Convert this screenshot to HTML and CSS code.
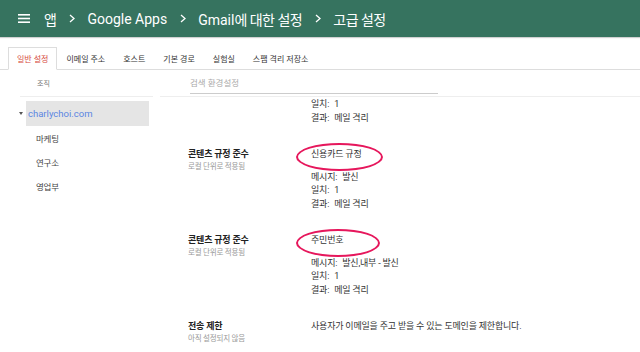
FILE: index.html
```html
<!DOCTYPE html>
<html lang="ko">
<head>
<meta charset="utf-8">
<link rel="stylesheet" href="styles.css">
</head>
<body>
<header class="appbar">
  <svg class="ham" width="12" height="9" viewBox="0 0 12 9"><rect x="0" y="0" width="12" height="1.6" fill="#fff"/><rect x="0" y="3.7" width="12" height="1.6" fill="#fff"/><rect x="0" y="7.4" width="12" height="1.6" fill="#fff"/></svg>
  <span class="ko">앱</span>
  <svg class="chev" width="6" height="9" viewBox="0 0 6 9"><path d="M1 1 L5 4.5 L1 8" fill="none" stroke="#fff" stroke-width="1.3"/></svg>
  <span>Google Apps</span>
  <svg class="chev" width="6" height="9" viewBox="0 0 6 9"><path d="M1 1 L5 4.5 L1 8" fill="none" stroke="#fff" stroke-width="1.3"/></svg>
  <span>Gmail<span class="ko">에 대한 설정</span></span>
  <svg class="chev" width="6" height="9" viewBox="0 0 6 9"><path d="M1 1 L5 4.5 L1 8" fill="none" stroke="#fff" stroke-width="1.3"/></svg>
  <span class="ko">고급 설정</span>
</header>
<nav class="tabs">
  <div class="tab active">일반 설정</div>
  <div class="tab">이메일 주소</div>
  <div class="tab">호스트</div>
  <div class="tab">기본 경로</div>
  <div class="tab">실험실</div>
  <div class="tab">스팸 격리 저장소</div>
</nav>
<div class="main">
  <aside class="side">
    <div class="side-head">조직</div>
    <div class="tree">
      <div class="node root"><span class="caret"></span><span class="node-label">charlychoi.com</span></div>
      <div class="node child">마케팅</div>
      <div class="node child">연구소</div>
      <div class="node child">영업부</div>
    </div>
  </aside>
  <section class="content">
    <div class="search-bar"><div class="search">검색 환경설정</div></div>
    <div class="rows">
      <div class="row first">
        <div class="label"></div>
        <div class="value">
          <div class="line"><span class="k">일치:</span>1</div>
          <div class="line"><span class="k">결과:</span>메일 격리</div>
        </div>
      </div>
      <div class="row">
        <div class="label">
          <div class="title">콘텐츠 규정 준수</div>
          <div class="sub">로컬 단위로 적용됨</div>
        </div>
        <div class="value">
          <div class="line"><span class="mark mark-a">신용카드 규정</span></div>
          <div class="details">
            <div class="line"><span class="k">메시지:</span>발신</div>
            <div class="line"><span class="k">일치:</span>1</div>
            <div class="line"><span class="k">결과:</span>메일 격리</div>
          </div>
        </div>
      </div>
      <div class="row">
        <div class="label">
          <div class="title">콘텐츠 규정 준수</div>
          <div class="sub">로컬 단위로 적용됨</div>
        </div>
        <div class="value">
          <div class="line"><span class="mark mark-b">주민번호</span></div>
          <div class="details">
            <div class="line"><span class="k">메시지:</span>발신,내부 - 발신</div>
            <div class="line"><span class="k">일치:</span>1</div>
            <div class="line"><span class="k">결과:</span>메일 격리</div>
          </div>
        </div>
      </div>
      <div class="row">
        <div class="label">
          <div class="title">전송 제한</div>
          <div class="sub">아직 설정되지 않음</div>
        </div>
        <div class="value">
          <div class="line">사용자가 이메일을 주고 받을 수 있는 도메인을 제한합니다.</div>
        </div>
      </div>
    </div>
  </section>
</div>
</body>
</html>
```
FILE: styles.css
```css
* { box-sizing: border-box; margin: 0; padding: 0; }
html, body { background: #fff; }
body {
  margin: 0;
  width: 640px;
  height: 352px;
  overflow: hidden;
  font-family: Roboto, "Noto Sans CJK KR", sans-serif;
  color: #333;
}
.appbar {
  height: 37px;
  background: #36735f;
  display: flex;
  align-items: center;
  gap: 11px;
  padding-left: 18px;
  color: #fff;
  font-size: 14px;
  white-space: nowrap;
  box-shadow: 0 1px 1px rgba(0,0,0,0.18);
  position: relative;
}
.appbar .ham { margin-right: 3px; }
.appbar .chev { margin: 0 1.5px; }
.ko { letter-spacing: -0.5px; }

.tabs {
  margin-top: 10px;
  padding-left: 8px;
  height: 23px;
  display: flex;
  border-bottom: 1px solid #ddd;
  font-size: 8px;
}
.tab {
  height: 23px;
  padding: 0 9px;
  display: flex;
  align-items: center;
  color: #333;
  white-space: nowrap;
}
.tab.active {
  border: 1px solid #ddd;
  border-bottom: 1px solid #fff;
  background: #fff;
  color: #d5493c;
  padding: 0 8px;
}

.main { display: flex; }
.side { width: 160px; flex: none; }
.side-head {
  margin-left: 20px;
  width: 133px;
  height: 27px;
  padding-left: 17px;
  border-bottom: 1px solid #eee;
  display: flex;
  align-items: center;
  font-size: 7px;
  color: #777;
}
.tree { margin-top: 4px; }
.node { display: flex; align-items: center; }
.node.root { height: 25px; padding-left: 19px; }
.caret {
  width: 0; height: 0;
  border-left: 2.5px solid transparent;
  border-right: 2.5px solid transparent;
  border-top: 3px solid #555;
  margin-right: 3px;
}
.node-label {
  width: 123px;
  height: 25px;
  background: #e5e5e5;
  padding-left: 2px;
  display: flex;
  align-items: center;
  color: #5b86e2;
  font-size: 9.5px;
}
.node.child {
  height: 24px;
  padding-left: 36px;
  font-size: 8.5px;
  letter-spacing: -0.2px;
  color: #444;
}

.content { flex: 1; }
.search-bar {
  height: 27px;
  border-bottom: 1px solid #eee;
  padding-left: 30px;
}
.search {
  width: 248px;
  height: 24px;
  border-bottom: 1px solid #ccc;
  display: flex;
  align-items: center;
  font-size: 8.5px;
  color: #aaa;
}
.rows { padding-left: 28px; }
.row { display: flex; padding-top: 23px; }
.row.first { padding-top: 1px; }
.label { width: 123px; flex: none; }
.title {
  font-size: 9px;
  line-height: 13.5px;
  font-weight: 700;
  color: #222;
  letter-spacing: -0.2px;
}
.sub {
  font-size: 7.5px;
  line-height: 10px;
  color: #999;
  letter-spacing: -0.2px;
}
.value { flex: 1; }
.line {
  font-size: 9px;
  line-height: 13.5px;
  letter-spacing: -0.2px;
  color: #333;
  white-space: nowrap;
}
.k { margin-right: 5px; }
.details { margin-top: 9px; }
.mark { position: relative; display: inline-block; }
.mark::after {
  content: "";
  position: absolute;
  left: -15px;
  top: -5px;
  height: 24px;
  border: 2px solid #e6175c;
  border-radius: 50%;
}
.mark-a::after { width: 83px; }
.mark-b::after { width: 80px; }
```
